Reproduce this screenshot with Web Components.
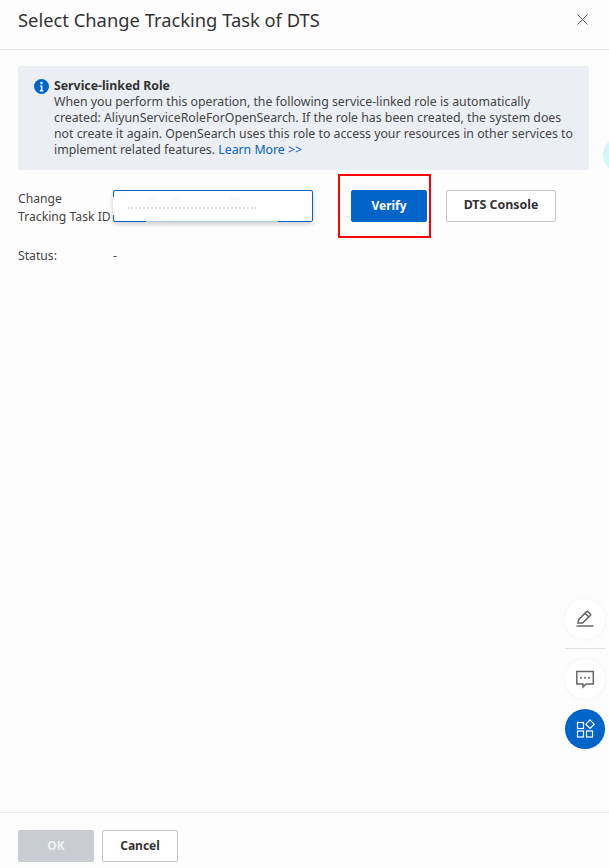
<!DOCTYPE html>
<html>
<head>
<meta charset="utf-8">
<style>
  html, body { margin: 0; height: 100%; background: #fdfdfd; }
  body { font-family: "Noto Sans", "Liberation Sans", sans-serif; color: #333; overflow: hidden; }
</style>
</head>
<body>
<dts-dialog>
  <span slot="title">Select Change Tracking Task of DTS</span>
  <info-alert>
    <span slot="title">Service-linked Role</span>
    When you perform this operation, the following service-linked role is automatically created: AliyunServiceRoleForOpenSearch. If the role has been created, the system does not create it again. OpenSearch uses this role to access your resources in other services to implement related features. <a href="#">Learn More &gt;&gt;</a>
  </info-alert>
  <task-form></task-form>
  <ui-button slot="footer" kind="disabled">OK</ui-button>
  <ui-button slot="footer">Cancel</ui-button>
</dts-dialog>
<side-blob></side-blob>
<float-tools></float-tools>

<script>
class UiButton extends HTMLElement {
  constructor() {
    super();
    this.attachShadow({ mode: 'open' }).innerHTML = `
      <style>
        :host {
          display: inline-flex; align-items: center; justify-content: center;
          box-sizing: border-box; height: 32px; width: 76px; border-radius: 2px;
          border: 1px solid #c0c6cc; background: #fff; color: #333;
          font-size: 12px; font-weight: 700; cursor: pointer;
        }
        :host([kind="primary"]) { background: #0064c8; border-color: #0064c8; color: #fff; }
        :host([kind="disabled"]) { background: #c9ccd0; border-color: #c9ccd0; color: #f0f1f2; cursor: not-allowed; }
        :host([slot="footer"]) { padding-bottom: 2px; }
        :host([wide]) { width: 110px; font-size: 12.4px; padding-bottom: 2px; }
      </style>
      <slot></slot>`;
  }
}
customElements.define('ui-button', UiButton);

class DtsDialog extends HTMLElement {
  constructor() {
    super();
    this.attachShadow({ mode: 'open' }).innerHTML = `
      <style>
        :host { display: flex; flex-direction: column; height: 868px; box-sizing: border-box; }
        header {
          display: flex; align-items: center; justify-content: space-between;
          height: 50px; box-sizing: border-box; padding: 0 21px 10px 18px;
          border-bottom: 1px solid #e9eaeb;
        }
        .title { font-size: 18.35px; color: #333; line-height: 40px; }
        .close { width: 11px; height: 11px; display: block; }
        main { flex: 1; padding: 16px 20px 0 18px; }
        footer {
          display: flex; gap: 8px; height: 56px; box-sizing: border-box;
          padding: 17px 18px 0; border-top: 1px solid #e9eaeb;
        }
      </style>
      <header>
        <span class="title"><slot name="title"></slot></span>
        <svg class="close" viewBox="0 0 11 11"><path d="M.5.5l10 10M10.5.5l-10 10" stroke="#555" stroke-width="1" fill="none"/></svg>
      </header>
      <main><slot></slot></main>
      <footer><slot name="footer"></slot></footer>`;
  }
}
customElements.define('dts-dialog', DtsDialog);

class InfoAlert extends HTMLElement {
  constructor() {
    super();
    this.attachShadow({ mode: 'open' }).innerHTML = `
      <style>
        :host {
          display: flex; gap: 5px; box-sizing: border-box; height: 104px;
          padding: 12px 13px 0 16px; background: #ebeff4; border-radius: 2px;
          font-size: 12.3px; line-height: 16px; color: #444;
        }
        svg { width: 15px; height: 15px; flex: none; margin-top: 1px; }
        .title { font-weight: 700; color: #333; }
        ::slotted(a) { color: #0064c8; text-decoration: none; }
      </style>
      <svg viewBox="0 0 16 16">
        <circle cx="8" cy="8" r="8" fill="#0064c8"/>
        <circle cx="8" cy="4.3" r="1.3" fill="#fff"/>
        <path d="M6.3 6.8h2.7v5.2h1v1.2H6.2V12h1.1V8H6.3z" fill="#fff"/>
      </svg>
      <div>
        <div class="title"><slot name="title"></slot></div>
        <slot></slot>
      </div>`;
  }
}
customElements.define('info-alert', InfoAlert);

class TaskForm extends HTMLElement {
  constructor() {
    super();
    this.attachShadow({ mode: 'open' }).innerHTML = `
      <style>
        :host { display: block; padding-top: 20px; font-size: 12.2px; line-height: 18px; color: #444; }
        .row { display: grid; grid-template-columns: 95px 200px auto auto; justify-content: start; align-items: start; }
        .value { box-sizing: border-box; height: 32px; width: 200px; border: 1px solid #0064c8; border-radius: 2px;
                 background: #fff; box-shadow: 0 2px 5px rgba(0,0,0,.2); position: relative; }
        /* task id is blurred out in the reference */
        .gap-left { position: absolute; left: -1px; top: 6px; width: 1px; height: 18px; background: #fff; }
        .gap-bottom { position: absolute; left: 32px; width: 132px; bottom: -1px; height: 1px; background: #a9cdf0; }
        .blur { position: absolute; left: 14px; top: 16px; width: 128px; height: 0; border-top: 2px dotted #dcdcdc; }
        .patch { position: absolute; top: 6px; width: 11px; height: 11px; background: #fafafa; }
        .verify { position: relative; margin-left: 38px; }
        .mark { position: absolute; left: -13px; top: -16px; width: 93px; height: 64px; box-sizing: border-box;
                border: 2px solid #f00; pointer-events: none; }
        .console { margin-left: 19px; }
        .status { display: grid; grid-template-columns: 95px auto; margin-top: 21px; }
      </style>
      <div class="row">
        <div>Change<br>Tracking Task ID</div>
        <div class="value">
          <div class="gap-left"></div><div class="gap-bottom"></div>
          <div class="patch" style="left:32px"></div><div class="patch" style="left:56px"></div><div class="patch" style="left:116px"></div>
          <div class="blur"></div>
        </div>
        <div class="verify"><ui-button kind="primary">Verify</ui-button><div class="mark"></div></div>
        <div class="console"><ui-button wide>DTS Console</ui-button></div>
      </div>
      <div class="status"><div>Status:</div><div>-</div></div>`;
  }
}
customElements.define('task-form', TaskForm);

class SideBlob extends HTMLElement {
  constructor() {
    super();
    this.attachShadow({ mode: 'open' }).innerHTML = `
      <style>
        :host { position: absolute; left: 603px; top: 135px; width: 6px; height: 40px;
                background: radial-gradient(circle 20px at 20px 20px, #d2f8f6 98%, transparent 100%); }
      </style>`;
  }
}
customElements.define('side-blob', SideBlob);

class FloatTools extends HTMLElement {
  constructor() {
    super();
    this.attachShadow({ mode: 'open' }).innerHTML = `
      <style>
        :host { position: absolute; left: 565px; top: 599px; width: 40px; display: flex; flex-direction: column; }
        .btn { width: 40px; height: 40px; border-radius: 50%; background: #fff; display: flex;
               align-items: center; justify-content: center; box-shadow: 0 0 5px rgba(0,0,0,.05); }
        .btn.blue { background: #0064c8; margin-top: 10px; box-shadow: none; }
        hr { width: 40px; margin: 9px 0 10px; border: 0; border-top: 1px solid #e2e2e2; }
        svg { display: block; }
      </style>
      <div class="btn">
        <svg width="20" height="20" viewBox="0 0 20 20" fill="none" stroke="#666" stroke-width="1.5">
          <path d="M3 14l.8-3.6L11.6 2.6a1 1 0 0 1 1.4 0l2.4 2.4a1 1 0 0 1 0 1.4L7.6 14z"/>
          <path d="M10 4.2l3.8 3.8"/>
          <path d="M1.500 17h17"/>
        </svg>
      </div>
      <hr>
      <div class="btn">
        <svg width="20" height="20" viewBox="0 0 20 20" fill="none" stroke="#666" stroke-width="1.5">
          <path d="M1.800 2.500h16.500v12.500H11l-3 3v-3H1.800z"/>
          <circle cx="6" cy="8.700" r="1" fill="#666" stroke="none"/>
          <circle cx="10" cy="8.700" r="1" fill="#666" stroke="none"/>
          <circle cx="14" cy="8.700" r="1" fill="#666" stroke="none"/>
        </svg>
      </div>
      <div class="btn blue">
        <svg width="20" height="20" viewBox="0 0 20 20" fill="none" stroke="#fff" stroke-width="1.2">
          <rect x="2.500" y="3.500" width="6" height="6"/>
          <rect x="2.500" y="12" width="6" height="6"/>
          <rect x="11.500" y="12" width="6" height="6"/>
          <path d="M15 1l4.200 4.200-4.200 4.200-4.200-4.200z"/>
        </svg>
      </div>`;
  }
}
customElements.define('float-tools', FloatTools);
</script>
</body>
</html>
